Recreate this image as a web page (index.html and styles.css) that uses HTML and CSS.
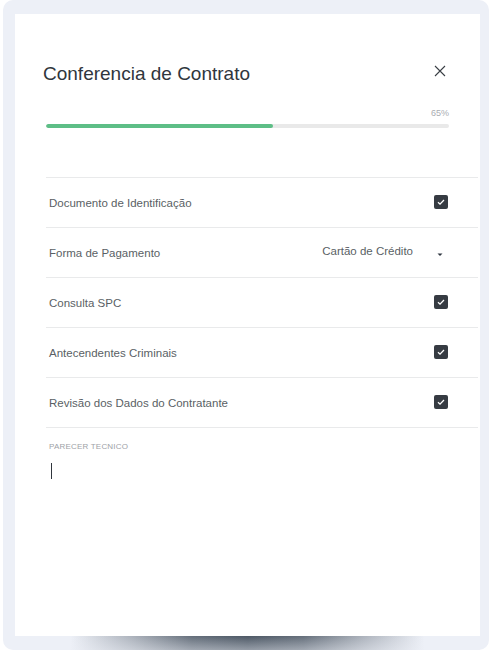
FILE: index.html
```html
<!DOCTYPE html>
<html lang="pt">
<head>
<meta charset="utf-8">
<link rel="stylesheet" href="styles.css">
</head>
<body>
<div class="frame">
  <div class="panel">
    <div class="header">
      <h1 class="title">Conferencia de Contrato</h1>
      <svg class="close" width="12" height="12" viewBox="0 0 12 12"><path d="M1 1L11 11M11 1L1 11" stroke="#3a3f45" stroke-width="1.1" fill="none"/></svg>
    </div>
    <div class="progress">
      <div class="pct">65%</div>
      <div class="track"><div class="fill" style="width:56.3%"></div></div>
    </div>
    <div class="list">
      <div class="row"><span class="label">Documento de Identificação</span><span class="check"><svg width="14" height="14" viewBox="0 0 14 14"><path d="M4 7.2L6 9.1L10 5" stroke="#fff" stroke-width="1.3" fill="none"/></svg></span></div>
      <div class="row"><span class="label">Forma de Pagamento</span><span class="select"><span class="value">Cartão de Crédito</span><svg class="caret" width="14" height="14" viewBox="0 0 14 14"><path d="M4.5 6.5L9.5 6.5L7 9Z" fill="#2f3640"/></svg></span></div>
      <div class="row"><span class="label">Consulta SPC</span><span class="check"><svg width="14" height="14" viewBox="0 0 14 14"><path d="M4 7.2L6 9.1L10 5" stroke="#fff" stroke-width="1.3" fill="none"/></svg></span></div>
      <div class="row"><span class="label">Antecendentes Criminais</span><span class="check"><svg width="14" height="14" viewBox="0 0 14 14"><path d="M4 7.2L6 9.1L10 5" stroke="#fff" stroke-width="1.3" fill="none"/></svg></span></div>
      <div class="row"><span class="label">Revisão dos Dados do Contratante</span><span class="check"><svg width="14" height="14" viewBox="0 0 14 14"><path d="M4 7.2L6 9.1L10 5" stroke="#fff" stroke-width="1.3" fill="none"/></svg></span></div>
      <div class="field">
        <div class="field-label">PARECER TECNICO</div>
        <div class="cursor"></div>
      </div>
    </div>
  </div>
  <div class="shadow"></div>
</div>
</body>
</html>
```
FILE: styles.css
```css
html, body {
  margin: 0;
  padding: 0;
  background: #ffffff;
  font-family: "Liberation Sans", Arial, sans-serif;
}
.frame {
  margin-left: 3px;
  width: 486px;
  height: 650px;
  box-sizing: border-box;
  background: #edf0f7;
  border-radius: 10px;
  padding: 14px 9px 0 12px;
  display: flex;
  flex-direction: column;
  overflow: hidden;
}
.panel {
  background: #ffffff;
  height: 622px;
  box-sizing: border-box;
  padding: 0 2px 0 28px;
  display: flex;
  flex-direction: column;
}
.header {
  display: flex;
  justify-content: space-between;
  align-items: flex-start;
  padding-top: 49px;
  padding-right: 32px;
}
.title {
  margin: 0;
  font-size: 19px;
  font-weight: normal;
  color: #30363d;
  line-height: 22px;
}
.close {
  margin-top: 2px;
}
.progress {
  margin-left: 3px;
  width: 403px;
  margin-top: 23px;
}
.pct {
  text-align: right;
  font-size: 9px;
  color: #a9adb2;
  line-height: 10px;
}
.track {
  margin-top: 6px;
  height: 4px;
  border-radius: 2px;
  background: #e9e9e9;
  overflow: hidden;
}
.fill {
  height: 100%;
  background: #5dbe86;
  border-radius: 2px;
}
.list {
  margin-left: 3px;
  margin-top: 49px;
}
.row {
  height: 50px;
  border-top: 1px solid #e9eaeb;
  box-sizing: border-box;
  display: flex;
  align-items: center;
  justify-content: space-between;
  padding: 0 30px 0 3px;
}
.label {
  font-size: 11.5px;
  color: #5a5f65;
}
.check {
  width: 14px;
  height: 14px;
  border-radius: 2px;
  background: #363b42;
  display: flex;
  margin-top: -1px;
}
.select {
  display: flex;
  align-items: center;
  gap: 20px;
  margin-right: 1px;
}
.value {
  font-size: 11.5px;
  color: #5a5f65;
  margin-top: -4px;
}
.caret {
  margin-top: 2px;
}
.field {
  border-top: 1px solid #e9eaeb;
  padding: 14px 3px 0;
}
.field-label {
  font-size: 8px;
  color: #9ea2a7;
  letter-spacing: 0.2px;
  line-height: 10px;
}
.cursor {
  margin-top: 11px;
  margin-left: 2px;
  width: 1px;
  height: 16px;
  background: #30363d;
}
.shadow {
  height: 14px;
  background:
    linear-gradient(to bottom, rgba(237,240,247,0) 0%, rgba(237,240,247,0.45) 100%),
    linear-gradient(to right, rgba(77,88,101,0) 12%, rgba(77,88,101,0.4) 25%, rgba(77,88,101,0.85) 38%, #4d5865 50%, rgba(77,88,101,0.85) 62%, rgba(77,88,101,0.4) 75%, rgba(77,88,101,0) 88%);
}
```
